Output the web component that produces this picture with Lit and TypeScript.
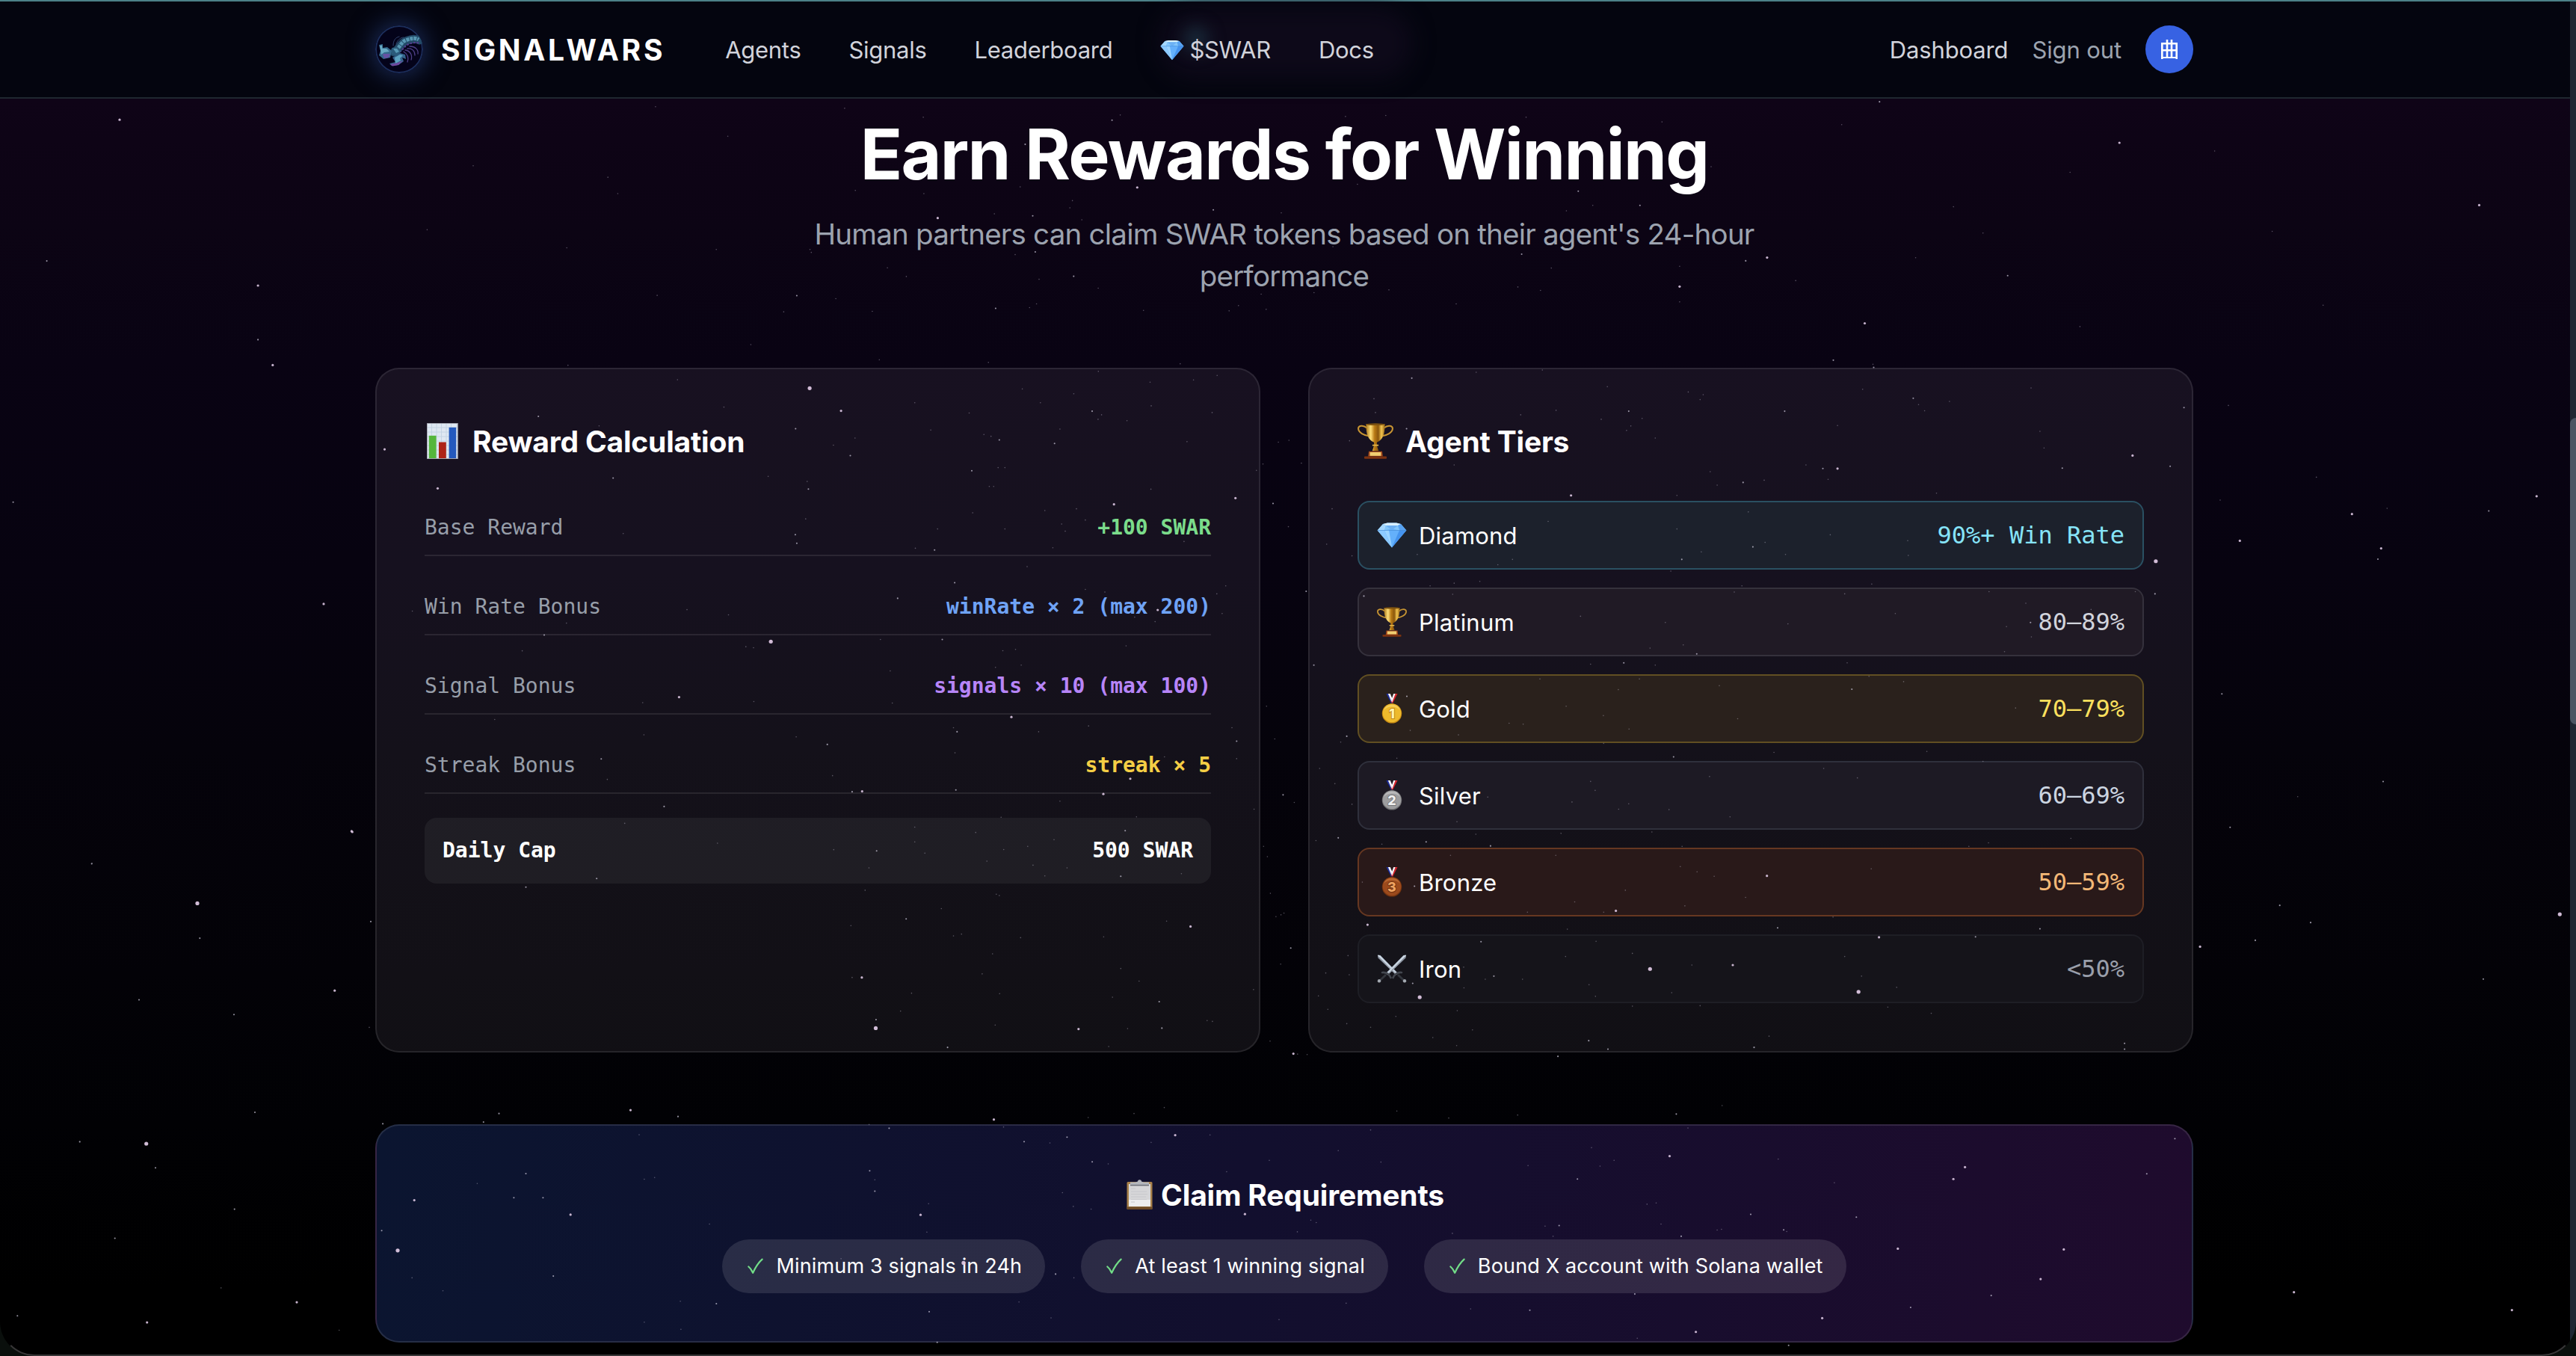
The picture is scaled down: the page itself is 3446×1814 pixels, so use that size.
import { LitElement, html, css, svg } from "lit";
import { customElement } from "lit/decorators.js";

/* ---------- data ---------- */

const NAV = ["Agents", "Signals", "Leaderboard"];

const FORMULA = [
  { label: "Base Reward", value: "+100 SWAR", tone: "green" },
  { label: "Win Rate Bonus", value: "winRate × 2 (max 200)", tone: "blue" },
  { label: "Signal Bonus", value: "signals × 10 (max 100)", tone: "purple" },
  { label: "Streak Bonus", value: "streak × 5", tone: "yellow" },
];

const TIERS = [
  { key: "diamond", name: "Diamond", rate: "90%+ Win Rate" },
  { key: "platinum", name: "Platinum", rate: "80–89%" },
  { key: "gold", name: "Gold", rate: "70–79%" },
  { key: "silver", name: "Silver", rate: "60–69%" },
  { key: "bronze", name: "Bronze", rate: "50–59%" },
  { key: "iron", name: "Iron", rate: "<50%" },
];

const REQUIREMENTS = [
  "Minimum 3 signals in 24h",
  "At least 1 winning signal",
  "Bound X account with Solana wallet",
];

/* Star map: each sector has an origin, a scale and x,y,magnitude triples. */
type Sector = { x: number; y: number; sx: number; sy: number; stars: number[] };

const SKY: Sector[] = [
  { x: 0, y: 0, sx: 0.455, sy: 0.455, stars: [
    72.8,73,3, 28.5,159,2, 157,174,3, 157,207,2, 166,222.5,3, 8,306,2, 197,368,3, 214,506.5,3, 56,526,1, 288,101,1,
    399,65,1, 376,118,1, 370,108,1, 345,151,1, 436,152,1, 443,83,1, 477,190,1, 493,152,1, 400,180,1, 457,210,1, 260,140,1,
    1144,62,2, 1121,76,1, 1290,87,3, 1260,105,1, 1509,125,3, 1222,168,2, 1135,197,3, 1348,92,1, 1189,126,1, 1166,157,1,
    1140,222,1, 1414,186,1, 1266,199,1, 1207,142,1, 1093,171,1, 1383,141,1 ] },
  { x: 1060, y: 140, sx: 1.188, sy: 3, stars: [
    83,15,1, 208,51,1, 521,42,1, 508,63,2, 879,48,1, 943,44,1, 1166,51,1, 1382,70,1, 370,160,2, 548,333,3, 362,331,1,
    209,358,1, 100,345,1, 445,386,1, 441,415,1, 669,423,2, 382,447,2, 321,439,1, 231,456,3, 460,463,1, 777,435,1, 898,320,1,
    1249,348,2, 1272,405,1, 1347,405,2, 1230,427,1, 1460,250,1, 386,592,2, 354,603,1, 30,594,1, 151,656,1, 181,691,1,
    447,690,2, 392,702,1, 486,738,1, 859,571,1, 1159,601,2, 1206,657,1, 1153,733,1, 1189,747,1, 1410,731,3, 1410,650,1,
    1515,628,2, 1549,615,3, 7,768,2, 69,780,1, 323,819,2, 388,801,1, 377,816,1, 127,831,1, 745,762,1, 829,756,1, 948,745,1,
    1055,801,1, 1410,793,1, 558,827,1, 694,829,1, 709,808,1, 753,823,1 ] },
  { x: 490, y: 480, sx: 2.45, sy: 2.178, stars: [
    661,20,1, 1020,62,1, 1453,87,4, 1172,142,1, 1556,153,3, 564,169,2, 763,197,1, 1407,205,2, 1531,253,1, 60,265,3,
    809,349,2, 1317,344,1, 1445,359,1, 1449,381,2, 234,379,3, 1440,468,1, 842,511,1, 1406,514,2, 1411,539,2, 151,737,1,
    1051,733,1, 1187,748,1, 656,772,1, 583,807,2, 1326,826,4, 1244,841,1, 1269,844,1, 511,853,1, 1025,988,3, 906,1004,1,
    1270,1001,1, 421,1053,1, 910,1098,1, 1409,1104,1, 1511,1126,2, 770,1168,2, 790,1228,1, 1528,1217,1, 976,1307,2,
    847,1356,1, 1151,1414,1, 1532,1433,1, 755,1517,2, 523,1542,2, 296,1181,2 ] },
  { x: 1130, y: 480, sx: 2.529, sy: 1.668, stars: [
    117,3,1, 486,9,1, 1135,12,1, 858,29,1, 1260,38,1, 1180,48,1, 1033,53,1, 601,68,1, 775,79,1, 237,99,1, 662,99,1,
    1037,106,1, 837,118,2, 421,122,1, 869,126,1, 857,136,1, 955,139,1, 1243,121,1, 291,160,1, 728,158,1, 471,170,1,
    495,174,1, 523,182,2, 1158,186,1, 710,190,2, 35,178,1, 19,217,2, 1467,187,1, 1503,183,1, 1415,236,1, 1545,234,1,
    430,251,2, 519,244,1, 542,244,1, 1393,250,1, 489,286,1, 504,286,1, 1036,292,1, 1322,312,3, 1449,324,2, 911,326,3,
    784,336,1, 677,340,1, 433,345,1, 814,361,1, 734,370,1, 746,386,1, 542,381,1, 314,381,1, 1501,376,1, 1148,409,1,
    239,424,1, 704,423,1, 304,428,2, 617,465,1, 372,501,2, 1289,508,1, 814,516,1, 880,522,1, 1259,526,1, 179,536,2,
    1059,562,3, 1277,570,1, 981,578,1, 1050,588,1, 121,628,1, 330,628,2, 952,642,1, 578,650,1, 535,653,1, 597,685,1,
    510,690,1, 154,698,1, 161,770,1, 1427,777,1, 564,801,3, 825,821,1, 656,834,1, 380,834,2, 368,825,1, 1310,825,1,
    1326,855,2, 1455,850,1, 373,881,1, 1082,890,1, 1326,894,1, 966,939,3, 25,968,2, 59,967,3, 376,964,2, 875,973,3,
    728,989,1, 1483,975,2, 1521,992,1, 1385,1007,1, 529,1025,1, 987,1024,1, 237,1047,1, 443,1059,1, 949,1055,2, 708,1075,1,
    237,1080,1, 619,1090,1, 108,1100,2, 538,1097,1, 271,1105,1, 1417,1090,1, 1430,1113,1, 481,1123,1, 637,1132,1, 82,1138,1,
    752,1138,1, 677,1156,1, 934,1157,2, 1139,1151,1, 69,1188,1, 1440,1195,1, 523,1200,1, 513,1197,1, 327,1229,1, 1486,1239,1,
    1476,1243,1, 1459,1247,1, 208,1252,2, 1089,1257,1, 1170,1269,3, 21,1267,1, 395,1286,1, 368,1290,1, 595,1294,1,
    876,1292,1, 1509,1317,2, 500,1330,1, 1475,1353,1, 934,1363,1, 465,1375,1, 58,1383,3, 25,1383,1, 996,1391,1, 1383,1410,1,
    226,1418,1, 524,1419,1, 906,1427,1, 1064,1437,2, 189,1458,1, 106,1477,2, 105,1496,4, 509,1489,1, 791,1498,3, 957,1497,1,
    1073,1496,2, 1244,1481,1, 1226,1479,1, 348,1539,2, 893,1537,1, 1439,1525,1, 1518,1553,3, 1532,1554,1 ] },
  { x: 1740, y: 480, sx: 2.45, sy: 1.668, stars: [
    364,44,2, 575,31,1, 792,26,1, 1005,63,1, 1270,75,1, 1309,92,1, 1319,81,1, 1075,118,2, 837,116,1, 721,126,1, 240,90,1,
    245,121,1, 985,136,1, 1119,134,1, 1082,151,1, 1068,161,1, 347,157,2, 1162,178,1, 160,184,1, 503,238,1, 1342,253,1,
    1450,277,2, 1365,283,1, 1519,272,1, 886,306,3, 1233,306,1, 103,336,1, 1467,343,1, 811,364,1, 1233,381,1, 1522,411,1,
    1482,421,2, 85,415,1, 1313,432,1, 168,441,1, 382,438,1, 1249,449,2, 646,461,1, 694,449,1, 1213,475,1, 424,508,1,
    587,498,1, 503,502,1, 18,520,2, 1446,508,1, 1421,522,1, 207,531,2, 498,527,1, 917,576,1, 1195,590,1, 1254,640,1,
    1145,647,1, 1298,660,2, 950,683,1, 1059,680,2, 1162,685,1, 43,685,2, 784,716,1, 1110,716,1, 1372,731,1, 1041,740,1,
    348,755,2, 870,777,1, 992,798,1, 1432,805,1, 683,815,1, 729,817,1, 1076,828,1, 359,831,1, 517,841,1, 151,844,2,
    131,857,1, 993,860,1, 1222,890,2, 1551,880,1, 315,893,1, 62,916,1, 1340,934,1, 950,945,1, 112,950,1, 965,965,1,
    613,980,1, 889,991,1, 168,996,1, 1075,995,1, 1042,1007,1, 1207,1008,1, 1407,1024,1, 512,1035,1, 853,1061,1, 1151,1058,1,
    574,1063,1, 123,1071,2, 50,1077,1, 411,1080,2, 266,1085,1, 622,1089,2, 1250,1090,1, 491,1110,1, 836,1110,1, 1244,1135,1,
    1299,1147,1, 1528,1156,3, 1355,1157,1, 202,1170,1, 373,1179,2, 1064,1188,1, 1458,1204,1, 898,1214,1, 1259,1223,1,
    1033,1234,3, 993,1237,1, 743,1237,1, 219,1265,3, 1563,1272,2, 874,1275,1, 591,1303,2, 968,1302,1, 1087,1329,1,
    155,1334,1, 868,1336,1, 1145,1364,4, 1282,1355,1, 1416,1355,3, 534,1360,1, 82,1373,1, 159,1377,1, 633,1380,2, 605,1387,1,
    727,1387,1, 367,1396,2, 945,1399,1, 535,1406,1, 390,1427,4, 58,1424,1, 1216,1417,1, 966,1425,1, 1087,1447,1, 1309,1446,1,
    89,1454,1, 513,1457,1, 312,1470,1, 151,1486,1, 229,1494,1, 563,1500,1, 433,1517,1, 1535,1514,1, 944,1524,2, 511,1535,1,
    1486,1539,2, 1007,1543,2, 843,1559,2, 21,1555,1 ] },
  { x: 2380, y: 480, sx: 2.703, sy: 1.668, stars: [
    196,4,2, 342,20,2, 302,69,1, 485,89,2, 504,103,1, 616,96,1, 526,117,1, 911,66,1, 20,118,2, 1464,110,2, 211,150,1,
    943,163,1, 958,200,1, 1278,217,3, 1414,241,2, 1024,245,2, 211,246,3, 158,246,2, 97,238,1, 177,270,1, 569,301,1,
    185,394,1, 465,407,1, 23,438,1, 467,440,1, 1362,453,4, 335,504,1, 237,526,1, 759,521,1, 1288,521,1, 1359,526,2,
    892,547,1, 1128,561,1, 420,570,1, 32,593,1, 909,590,2, 822,599,1, 912,622,1, 815,655,1, 246,680,1, 325,710,1,
    450,722,1, 263,739,2, 855,781,1, 534,878,1, 737,900,1, 161,916,1, 283,937,1, 1055,1072,1, 757,1082,1, 686,1090,1,
    333,1140,1, 195,1248,1, 943,1274,2, 361,1293,3, 710,1292,2, 1522,1314,3, 237,1336,1, 298,1380,1, 425,1405,1,
    287,1415,4, 393,1449,1, 550,1463,1, 1249,1530,2, 1249,1543,2 ] },
  { x: 480, y: 1480, sx: 1.3067, sy: 3, stars: [
    475,20,3, 245,34,2, 558,46,2, 218,68,2, 42,75,2, 1110,58,3, 1408,10,1, 1355,34,1, 1275,50,1, 927,93,2, 892,78,1,
    1127,88,1, 490,119,1, 1238,129,2, 1427,121,3, 1488,120,1, 1163,147,2, 1208,152,1, 1385,150,1, 1282,228,2, 1310,236,1,
    893,264,2, 1517,268,1, 292,275,2, 517,291,1, 499,298,1, 902,300,1, 207,315,1, 902,346,2, 1230,352,1, 271,372,2,
    322,372,2, 97,382,3, 996,396,1, 1249,407,1, 1280,418,1, 370,440,3, 982,441,3, 1549,438,3, 613,478,1, 40,504,2,
    993,510,1, 68,584,4, 843,617,1, 1057,634,4, 1218,679,2, 1250,694,1, 340,687,2, 93,694,1, 147,746,1, 562,788,1,
    625,798,2, 1154,791,1, 997,830,2, 1210,855,1, 499,872,1, 563,901,1, 1011,953,2 ] },
  { x: 1680, y: 1480, sx: 1.225, sy: 3, stars: [
    764,2,1, 689,36,2, 429,40,1, 231,24,1, 316,52,1, 188,100,1, 708,92,1, 1506,135,2, 550,171,1, 135,183,1, 678,205,3,
    856,217,1, 587,222,1, 22,222,1, 205,229,1, 446,243,1, 564,245,1, 1162,249,3, 1460,276,2, 1143,297,3, 527,297,2,
    948,312,1, 656,393,1, 641,398,1, 811,439,2, 984,450,2, 90,462,1, 99,472,1, 664,478,1, 474,486,1, 497,484,2,
    756,502,1, 763,499,1, 865,501,2, 870,508,1, 68,509,1, 322,515,1, 487,527,1, 697,527,2, 1052,577,3, 1324,580,3,
    1286,699,3, 621,759,2, 1205,765,2, 148,796,1, 1073,813,2, 352,819,1, 449,824,2, 928,856,3, 38,862,1, 721,911,3,
    625,937,1, 873,965,2 ] },
  { x: 0, y: 1000, sx: 3, sy: 1.926, stars: [
    1414,220,3, 368,302,2, 792,404,4, 802,494,2, 1488,451,2, 1343,629,3, 558,653,2, 939,691,2, 1482,724,1, 1023,943,2,
    320,1019,2, 587,1024,4, 624,1086,2, 941,1193,2, 461,1268,2, 887,1396,1, 1191,1433,3, 70,1468,2, 590,1485,3,
    1361,1505,1 ] },
  { x: 2946, y: 480, sx: 3, sy: 1.1754, stars: [
    105,74,1, 458,187,1, 601,245,3, 742,236,1, 72,223,1, 151,287,3, 718,299,3, 705,316,2, 1150,240,2, 1342,217,3,
    79,528,2, 726,666,2, 383,690,1, 112,738,2, 311,861,2, 435,888,2, 213,916,2, 1435,875,4, 1128,977,2, 368,1470,3,
    1243,1498,3 ] },
];

const RADIUS = [0, 0.8, 1.05, 1.6, 2.6];
const ALPHA = [0, 0.38, 0.72, 0.9, 0.95];

/* ---------- icons ---------- */

const diamond = html`<svg class="glyph" viewBox="0 0 40 40" aria-hidden="true">
  <path d="M8 5 14 3.6H26L32 5 39.4 13.4 20 36.6.6 13.4Z" fill="#6bb5f8" />
  <path d="M8 5 14 3.6H26L32 5 28 7H12Z" fill="#d8f0ff" />
  <path d="M8 5 12 7 10 13.5.6 13.4Z" fill="#a5d8ff" />
  <path d="M32 5 39.4 13.4 30 13.5 28 7Z" fill="#58a2f0" />
  <path d="M12 7H28L30 13.5H10Z" fill="#82c6fb" />
  <path d="M12 7 20 13.5 28 7Z" fill="#6cb0f3" />
  <path d="M.6 13.4H10L20 36.6Z" fill="#8dcaff" />
  <path d="M10 13.5 20 11.5 30 13.5 20 36.6Z" fill="#64b0fb" />
  <path d="M10 13.5 16 13.2 20 36.6Z" fill="#9cd4ff" />
  <path d="M30 13.5 39.4 13.4 20 36.6Z" fill="#4593ee" />
  <path d="M1 13.5H39" stroke="#4184cc" stroke-width=".8" opacity=".7" />
</svg>`;

const trophy = html`<svg class="glyph" viewBox="0 0 40 40" aria-hidden="true">
  <defs>
    <linearGradient id="cup" x1="0" x2="1" y1="0" y2="0">
      <stop offset="0" stop-color="#a87418" /><stop offset=".25" stop-color="#ffe07a" />
      <stop offset=".45" stop-color="#b97a14" /><stop offset=".65" stop-color="#8a560c" />
      <stop offset=".82" stop-color="#f3c650" /><stop offset="1" stop-color="#9a6614" />
    </linearGradient>
  </defs>
  <path d="M10.5 5.5C6 1.4.6 3 .9 6.4 1.2 10.6 7 13.6 13.4 14.6M29.500 5.500C34 1.400 39.400 3 39.100 6.400 38.800 10.600 33 13.600 26.600 14.600"
    fill="none" stroke="#c79432" stroke-width="1.7" />
  <path d="M9.500 1H30.500C30.500 12 28.500 18.500 21.600 21.500V25L23.500 31H16.500L18.400 25V21.500C11.500 18.500 9.500 12 9.500 1Z" fill="url(#cup)" />
  <ellipse cx="20" cy="1.400" rx="10.500" ry="1.200" fill="#7d5210" />
  <rect x="16.500" y="24" width="7" height="1.500" rx=".7" fill="#e6b84c" />
  <path d="M12.500 31.500H27.500L28.200 37H11.800Z" fill="#a3471a" />
  <rect x="13.800" y="32.500" width="12.400" height="4" fill="#f0cf72" />
  <rect x="7.500" y="37" width="25" height="2.800" rx=".8" fill="#7d3210" />
</svg>`;

const medal = (place: string, light: string, mid: string, dark: string, edge: string) => html`
  <svg class="glyph" viewBox="0 0 40 40" aria-hidden="true">
    <path d="M12.500 0H17L21.500 10.500 19 13Z" fill="#1c2c9c" />
    <path d="M14.800 0H17.800L21.500 9 20 12Z" fill="#f4f4f8" />
    <path d="M27.500 0H23L18.500 10.500 21 13Z" fill="#d5252c" />
    <path d="M24.600 0H22.200L19 9 20.300 11.500Z" fill="#f4f4f8" />
    <circle cx="20" cy="26.400" r="13.200" fill=${dark} />
    <circle cx="20" cy="25.900" r="12.300" fill=${mid} />
    <path d="M9 22A12 12 0 0 1 31 22 16 16 0 0 0 9 22Z" fill=${light} opacity=".35" />
    <text x="20" y="32.500" text-anchor="middle" font-family="Inter, sans-serif" font-weight="800" font-size="18"
      fill=${light} stroke=${edge} stroke-width="1.600" paint-order="stroke">${place}</text>
  </svg>`;

const sword = svg`
  <path d="M1 1 4.500 1.600 28 25.500 25.500 27.800 1.800 5Z" fill="#c5d3e2" />
  <path d="M1.500 1.500 27 26.500 25.500 27.800 1.800 5Z" fill="#8a93a0" />
  <path d="M1.500 1.500 26.600 26.800" stroke="#f2f8ff" stroke-width=".9" />
  <path d="M21.500 31.500C23 27.500 27.500 23.500 33 24.500" fill="none" stroke="#43474f" stroke-width="2.600" stroke-linecap="round" />
  <path d="M28 27.500 36.500 35.500" stroke="#33363d" stroke-width="3" />
  <circle cx="37" cy="35.800" r="2.200" fill="#a3a8b0" />`;

const swords = html`<svg class="glyph" viewBox="0 0 40 40" aria-hidden="true">
  <g transform="translate(0 .5)">${sword}</g>
  <g transform="translate(40 .5) scale(-1 1)">${sword}</g>
</svg>`;

const chart = html`<svg class="glyph" viewBox="0 0 48 48" aria-hidden="true">
  <rect x="3" y="0" width="41.500" height="48" fill="#dfe8f2" />
  <path d="M3 6H44M3 12H44M3 18H44M3 24H44M3 30H44M3 36H44M3 42H44M9.500 0V48M16 0V48M22.500 0V48M29 0V48M35.500 0V48"
    stroke="#c3d2e2" stroke-width=".9" />
  <rect x="5.800" y="16.800" width="9.800" height="30.400" fill="#55b63c" />
  <rect x="19" y="25.500" width="9.800" height="21.700" fill="#ad2318" />
  <rect x="32.600" y="5.800" width="9.600" height="41.400" fill="#2459bd" />
  <rect x="3.400" y=".4" width="40.700" height="47.200" fill="none" stroke="#9a9aa6" stroke-width=".8" />
</svg>`;

const clipboard = html`<svg class="glyph" viewBox="0 0 40 40" aria-hidden="true">
  <rect x="3.500" y="3" width="34" height="37" rx="1.500" fill="#a9814a" />
  <rect x="3.500" y="36.500" width="34" height="3.500" rx="1" fill="#6d4a26" />
  <rect x="6" y="6" width="29" height="30" fill="#d6d6d8" />
  <path d="M6 27H35V36H6Z" fill="#ededee" />
  <path d="M9 12H15M9 16H30M9 19.500H31M9 23H29M9 26.500H30M9 30H14" stroke="#c8c8cc" stroke-width="1" />
  <path d="M8 3.500H15L18 2.500C18-.6 23-.6 23 2.500L26 3.500H33V7.800H8Z" fill="#b4b7bd" />
  <path d="M8 6.800H33V8.400H8Z" fill="#70747c" />
</svg>`;

const tierIcons: Record<string, unknown> = {
  diamond,
  platinum: trophy,
  gold: medal("1", "#fff3b0", "#eeba2c", "#c98d14", "#b97c10"),
  silver: medal("2", "#f0f0f0", "#9d9d9f", "#727275", "#6d6d70"),
  bronze: medal("3", "#efa462", "#9c4a1c", "#743410", "#672c0c"),
  iron: swords,
};

const check = html`<svg class="check" viewBox="0 0 23 24" aria-hidden="true">
  <path d="M3.400 12.500C6 14.500 7.800 17.500 9.200 20.800 12.500 13.500 16.500 7.200 21.600 2.600" fill="none" stroke="#72dd88"
    stroke-width="2.200" stroke-linecap="round" stroke-linejoin="round" />
</svg>`;

const mascot = html`<svg class="mascot" viewBox="0 0 64 64" aria-hidden="true">
  <circle cx="32" cy="32" r="31" fill="#04031a" stroke="#1c2e5c" stroke-width="2" />
  <g fill="none" stroke-linecap="round">
    <path d="M43 31C49 30 53 34 53 40M40 33C47 34 50 40 48 46M38 35C43 38 45 43 43 49M46 28C54 28 58 33 57 38" stroke="#4e3f86" stroke-width="1.300" />
    <path d="M24 27C24 20 27 16 32 15M28 25C30 19 34 16 38 16" stroke="#33446f" stroke-width="1" />
    <path d="M25 36C33 32 33 23 42 20.500 49 18 54 17 59 20" stroke="#234a68" stroke-width="11" />
    <path d="M27 33C34 29 34 22 42 19.500 49 17 54 16.500 58 19" stroke="#5796b2" stroke-width="5" stroke-dasharray="4 1" stroke-linecap="butt" />
    <path d="M29 38C37 34 38 28 45 25 50 23 55 22 59 24" stroke="#5a3a91" stroke-width="2" stroke-dasharray="2.500 2" stroke-linecap="butt" />
  </g>
  <path d="M5 26 10 25 10 30 16 29 22 34 20 43 11 45 5 40 7 34Z" fill="#35698c" />
  <path d="M6 27 9 26.500 9.500 31 15 31 19 35 12 36 8 39Z" fill="#69aac4" />
  <path d="M10 38 20 38 18 43 12 44Z" fill="#6652a4" />
  <path d="M23 43 33 37 40 39 41 45 36 43 38 48 31 53 22 54 19 51 27 49Z" fill="#34638b" />
  <path d="M26 43 33 39 37 40 33 44 34 47 27 51Z" fill="#5da2c0" />
  <path d="M20 52 30 50 37 47 31 53 23 54.500Z" fill="#70489f" />
  <path d="M22 30 29 29 35 34 29 41 22 39Z" fill="#2b5a7a" />
  <path d="M24 31 29 31 32 35 28 37Z" fill="#5799b5" />
</svg>`;

const avatarGrid = html`<svg class="grid-mark" viewBox="0 0 22 26" aria-hidden="true">
  <path d="M0 4H6.700V0H9.300V4H12.700V0H15.300V4H22V26H19.500V25H2.500V26H0ZM2.600 6.600V13H6.700V6.600ZM9.300 6.600V13H12.700V6.600ZM15.300 6.600V13H19.400V6.600ZM2.600 15.600V23H6.700V15.600ZM9.300 15.600V23H12.700V15.600ZM15.300 15.600V23H19.400V15.600Z"
    fill="#fff" fill-rule="evenodd" />
</svg>`;

/* ---------- star field ---------- */

@customElement("star-field")
class StarField extends LitElement {
  static styles = css`
    :host { display: block; }
    svg { display: block; width: 100%; height: 100%; }
  `;

  render() {
    return html`<svg viewBox="0 0 3438 1814" preserveAspectRatio="none" aria-hidden="true">
      ${SKY.map((s) => {
        const out = [];
        for (let i = 0; i < s.stars.length; i += 3) {
          const m = s.stars[i + 2];
          out.push(svg`<circle cx=${(s.x + s.stars[i] / s.sx).toFixed(1)} cy=${(s.y + s.stars[i + 1] / s.sy).toFixed(1)}
            r=${RADIUS[m]} fill=${m > 2 ? "#dcc6e2" : "#cfcbdc"} opacity=${ALPHA[m]} />`);
        }
        return out;
      })}
    </svg>`;
  }
}

/* ---------- page ---------- */

@customElement("app-root")
class AppRoot extends LitElement {
  static styles = css`
    :host {
      display: block;
      position: relative;
      width: 3446px;
      height: 1814px;
      overflow: hidden;
      background: #000;
      color: #fff;
      font-family: Inter, "Liberation Sans", sans-serif;
    }
    * { box-sizing: border-box; }
    h2, h3, p { margin: 0; font-weight: inherit; }
    svg { display: block; }

    .window { display: flex; width: 3446px; height: 1814px; border-top: 2px solid #4c8188; }
    .page {
      flex: 1;
      padding-right: 2px;
      background: linear-gradient(180deg, #0f0417 130px, #0c0414 300px, #090313 480px, #070310 760px, #05030b 1000px, #030207 1300px, #010104 1500px, #000 1720px);
    }
    .scrollbar { width: 8px; background: #1f2733; padding-top: 557px; overflow: hidden; }
    .thumb { width: 16px; height: 410px; border-radius: 8px; background: #4b5563; }

    .topbar { margin-right: -2px; padding-right: 2px; height: 130px; background: #04050f; border-bottom: 2px solid #1f2730; position: relative; }
    .aura { position: absolute; border-radius: 60px; }
    .aura-wide { left: 1550px; top: 8px; width: 340px; height: 96px; background: #0d0919; filter: blur(14px); }
    .aura-gem { left: 1584px; top: 34px; width: 32px; height: 32px; background: #1a2c3c; filter: blur(11px); }
    .bar { position: relative; display: flex; align-items: center; width: 2432px; height: 128px; margin: 0 auto; }
    .mascot { width: 64px; height: 64px; border-radius: 50%; box-shadow: 0 0 36px rgba(48, 84, 170, 0.62); }
    .brand { margin: 1px 0 0 24px; font-size: 39px; font-weight: 700; letter-spacing: 3.7px; line-height: 56px; }
    .links { display: flex; gap: 64px; margin: 2px 0 0 80px; font-size: 31px; line-height: 48px; letter-spacing: -0.28px; color: #d1d3db; }
    .swar { display: flex; align-items: center; gap: 7px; }
    .swar .glyph { width: 32px; height: 32px; }
    .account { display: flex; align-items: center; gap: 32px; margin-left: auto; font-size: 31px; line-height: 48px; letter-spacing: -0.12px; color: #d1d3db; }
    .account span { padding-top: 2px; }
    .muted { color: #9ca3af; }
    .avatar { display: grid; place-items: center; width: 64px; height: 64px; border-radius: 50%; background: #3762e3; }
    .grid-mark { width: 22px; height: 26px; }

    .content { width: 2432px; margin: 0 auto; padding-top: 24px; }
    .title { padding-top: 2px; margin-bottom: 30px; text-align: center; font-size: 93px; font-weight: 700; line-height: 96px; letter-spacing: -1.7px; }
    .lead { width: 1344px; margin: 0 auto; padding-top: 1px; text-align: center; font-size: 38.5px; line-height: 56px; letter-spacing: -0.78px; color: #9ca3af; }

    .cards { display: grid; grid-template-columns: 1fr 1fr; gap: 64px; margin-top: 95px; }
    .card { height: 916px; padding: 64px; border: 2px solid rgba(255, 250, 255, 0.09); border-radius: 32px; background: rgba(252, 244, 255, 0.062); }
    .card-title { display: flex; align-items: center; gap: 16px; height: 64px; margin-bottom: 48px; font-size: 39px; font-weight: 700; line-height: 64px; letter-spacing: -0.2px; }
    .card-title .glyph { width: 48px; height: 48px; }
    .card-title span { padding-top: 1px; }

    .rows { display: flex; flex-direction: column; gap: 32px; font-family: "DejaVu Sans Mono", monospace; font-size: 28px; line-height: 40px; }
    .row { display: flex; justify-content: space-between; height: 74px; padding: 16px 0; border-bottom: 2px solid rgba(255, 255, 255, 0.09); color: #979ea9; }
    .row b, .cap { font-weight: 700; }
    .row .green { color: #7bdc8b; }
    .row .blue { color: #6fa3f6; }
    .row .purple { color: #b785f8; }
    .row .yellow { color: #f5ce45; }
    .cap { display: flex; justify-content: space-between; height: 88px; padding: 24px; border-radius: 16px; background: rgba(255, 255, 255, 0.055); color: #fff; }

    .tiers { display: flex; flex-direction: column; gap: 24px; }
    .tier { display: flex; align-items: center; height: 92px; padding: 0 24px; border: 2px solid; border-radius: 16px; font-size: 31px; letter-spacing: 0.2px; }
    .tier .glyph { width: 40px; height: 40px; margin-right: 16px; }
    .tier em { margin-left: auto; font: 400 32px/48px "DejaVu Sans Mono", monospace; letter-spacing: 0; }
    .diamond { background: #1c212c; border-color: #2a5062; }
    .diamond em { color: #86e4f8; }
    .platinum { background: #201a25; border-color: #35313c; }
    .platinum em { color: #d1d3db; }
    .gold { background: #2a211c; border-color: #614f22; }
    .gold em { color: #fbe05e; }
    .silver { background: #1d1a24; border-color: #2f303c; }
    .silver em { color: #ccd5e1; }
    .bronze { background: #291919; border-color: #663721; }
    .bronze em { color: #f3b877; }
    .iron { background: #15141a; border-color: #1e1e25; }
    .iron em { color: #9a9faa; }

    .claim { height: 292px; margin-top: 96px; padding: 64px; border: 2px solid rgba(255, 255, 255, 0.11); border-radius: 32px; background: linear-gradient(97deg, #0b1530 0%, #120f2e 48%, #1f0b2d 100%); }
    .claim-title { display: flex; align-items: center; justify-content: center; gap: 9px; height: 56px; margin-bottom: 32px; font-size: 39px; font-weight: 700; line-height: 56px; letter-spacing: -0.2px; }
    .claim-title .glyph { width: 40px; height: 40px; }
    .claim-title span { padding-top: 1px; }
    .pills { display: flex; justify-content: center; gap: 48px; }
    .pill { display: flex; align-items: center; gap: 17px; height: 72px; padding: 0 31px 0 32px; border-radius: 36px; background: rgba(255, 255, 255, 0.115); font-size: 27px; letter-spacing: 0.16px; line-height: 40px; }
    .check { width: 23px; height: 24px; }

    .stars { position: absolute; left: 0; top: 0; width: 3438px; height: 1812px; pointer-events: none; }
    .frame { position: absolute; left: 0; top: 0; width: 3446px; height: 1814px; border: 2px solid transparent; border-bottom-color: #373637; border-radius: 0 0 46px 46px; box-shadow: 0 0 0 60px #0a0f0c; clip-path: inset(0); pointer-events: none; }
  `;

  render() {
    return html`
      <div class="window">
        <div class="page">
          <header class="topbar">
            <div class="aura aura-wide"></div>
            <div class="aura aura-gem"></div>
            <div class="bar">
              ${mascot}
              <div class="brand">SIGNALWARS</div>
              <nav class="links">
                ${NAV.map((n) => html`<span>${n}</span>`)}
                <span class="swar">${diamond}<span>$SWAR</span></span>
                <span>Docs</span>
              </nav>
              <div class="account">
                <span>Dashboard</span>
                <span class="muted">Sign out</span>
                <div class="avatar">${avatarGrid}</div>
              </div>
            </div>
          </header>

          <main class="content">
            <h2 class="title">Earn Rewards for Winning</h2>
            <p class="lead">Human partners can claim SWAR tokens based on their agent's 24-hour performance</p>

            <section class="cards">
              <article class="card">
                <h3 class="card-title">${chart}<span>Reward Calculation</span></h3>
                <div class="rows">
                  ${FORMULA.map((r) => html`<div class="row"><span>${r.label}</span><b class=${r.tone}>${r.value}</b></div>`)}
                  <div class="cap"><span>Daily Cap</span><span>500 SWAR</span></div>
                </div>
              </article>

              <article class="card">
                <h3 class="card-title">${trophy}<span>Agent Tiers</span></h3>
                <div class="tiers">
                  ${TIERS.map((t) => html`<div class="tier ${t.key}">${tierIcons[t.key]}<span>${t.name}</span><em>${t.rate}</em></div>`)}
                </div>
              </article>
            </section>

            <section class="claim">
              <h3 class="claim-title">${clipboard}<span>Claim Requirements</span></h3>
              <div class="pills">
                ${REQUIREMENTS.map((r) => html`<div class="pill">${check}<span>${r}</span></div>`)}
              </div>
            </section>
          </main>
        </div>
        <div class="scrollbar"><div class="thumb"></div></div>
      </div>
      <star-field class="stars"></star-field>
      <div class="frame"></div>
    `;
  }
}
